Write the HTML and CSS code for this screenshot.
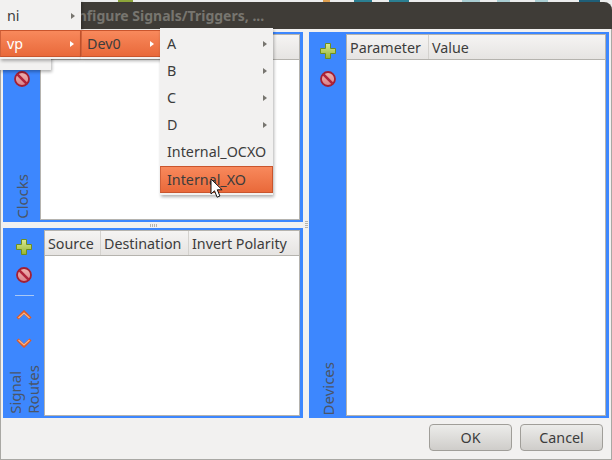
FILE: index.html
```html
<!DOCTYPE html>
<html lang="en">
<head>
  <meta charset="UTF-8" />
  <title>Configure Signals/Triggers, ...</title>
  <link rel="stylesheet" href="styles.css">
</head>
<body>
  <svg width="0" height="0" class="defs">
    <defs>
      <linearGradient id="plusFill" x1="0" y1="0" x2="0" y2="1">
        <stop offset="0" stop-color="#dcea94" />
        <stop offset="1" stop-color="#94b432" />
      </linearGradient>
      <linearGradient id="stopFill" x1="0" y1="0" x2="0" y2="1">
        <stop offset="0" stop-color="#f0b4b0" />
        <stop offset="1" stop-color="#d9808a" />
      </linearGradient>
      <symbol id="plus" viewBox="0 0 16 16">
        <path d="M5.5 .5h5v5h5v5h-5v5h-5v-5h-5v-5h5z" fill="url(#plusFill)" stroke="#6f8e20" />
      </symbol>
      <symbol id="stop" viewBox="0 0 16 16">
        <circle cx="8" cy="8" r="7" fill="url(#stopFill)" stroke="#a41f33" stroke-width="1.8" />
        <path d="M3.4 3.4l9.2 9.2" stroke="#b0233a" stroke-width="2.6" />
      </symbol>
      <symbol id="up" viewBox="0 0 16 10">
        <path d="M1.5 8.5l6.5-6.5 6.5 6.5" fill="none" stroke="#e05a24" stroke-width="3" />
        <path d="M2.5 8l5.5-5 5.5 5" fill="none" stroke="#f6b488" stroke-width="1.2" />
      </symbol>
      <symbol id="down" viewBox="0 0 16 10">
        <path d="M1.5 1.5l6.5 6.5 6.5-6.5" fill="none" stroke="#e05a24" stroke-width="3" />
        <path d="M2.5 2l5.5 5 5.5-5" fill="none" stroke="#f6b488" stroke-width="1.2" />
      </symbol>
    </defs>
  </svg>

  <div class="desktop">
    <span class="bit bit-green"></span>
    <span class="bit bit-orange"></span>
    <span class="bit bit-teal"></span>
    <span class="bit bit-teal2"></span>
    <span class="bit bit-pale"></span>
    <span class="bit bit-pale2"></span>
    <span class="bit bit-pale3"></span>
    <span class="bit bit-dark"></span>
  </div>

  <div class="window">
    <div class="titlebar"><span class="title">Configure Signals/Triggers, ...</span></div>

    <div class="content">
      <div class="left-col">
        <section class="group group-clocks">
          <div class="side side-clocks">
            <button class="tool"><svg class="ico"><use href="#plus" /></svg></button>
            <button class="tool"><svg class="ico"><use href="#stop" /></svg></button>
            <div class="side-label">Clocks</div>
          </div>
          <div class="table">
            <div class="thead"><div class="th th-blank"></div></div>
          </div>
        </section>

        <div class="split-h"><span class="grip grip-h"></span></div>

        <section class="group group-routes">
          <div class="side side-routes">
            <button class="tool"><svg class="ico"><use href="#plus" /></svg></button>
            <button class="tool"><svg class="ico"><use href="#stop" /></svg></button>
            <div class="sep"></div>
            <button class="tool"><svg class="ico-arrow"><use href="#up" /></svg></button>
            <button class="tool"><svg class="ico-arrow"><use href="#down" /></svg></button>
            <div class="side-label side-label-two">Signal<br>Routes</div>
          </div>
          <div class="table">
            <div class="thead">
              <div class="th th-source">Source</div>
              <div class="th th-dest">Destination</div>
              <div class="th th-blank">Invert Polarity</div>
            </div>
          </div>
        </section>
      </div>

      <div class="split-v"><span class="grip grip-v"></span></div>

      <section class="group group-devices">
        <div class="side side-devices">
          <button class="tool"><svg class="ico"><use href="#plus" /></svg></button>
          <button class="tool"><svg class="ico"><use href="#stop" /></svg></button>
          <div class="side-label">Devices</div>
        </div>
        <div class="table">
          <div class="thead">
            <div class="th th-param">Parameter</div>
            <div class="th th-blank">Value</div>
          </div>
        </div>
      </section>
    </div>

    <div class="buttons">
      <button class="btn">OK</button>
      <button class="btn">Cancel</button>
    </div>
  </div>

  <!-- open popup menus -->
  <div class="menu menu-back"></div>
  <div class="menu menu-root">
    <div class="item">ni<span class="arrow"></span></div>
    <div class="item active light">vp<span class="arrow"></span></div>
  </div>
  <div class="menu menu-dev">
    <div class="item active">Dev0<span class="arrow"></span></div>
  </div>
  <div class="menu menu-chan">
    <div class="item">A<span class="arrow"></span></div>
    <div class="item">B<span class="arrow"></span></div>
    <div class="item">C<span class="arrow"></span></div>
    <div class="item">D<span class="arrow"></span></div>
    <div class="item">Internal_OCXO</div>
    <div class="item active">Internal_XO</div>
  </div>

  <svg class="cursor" width="14" height="21" viewBox="0 0 14 21">
    <path d="M1 1v15l3.5-3.2 2.6 6.4 2.8-1.2-2.6-6.2h4.8z" fill="#fff" stroke="#111" stroke-width="1" />
  </svg>
</body>
</html>
```

FILE: styles.css
```css
* {
  box-sizing: border-box;
}

body {
  margin: 0;
  width: 612px;
  height: 460px;
  overflow: hidden;
  background: #eceded;
  font-family: "Noto Sans", sans-serif;
  font-size: 14.3px;
  color: #3c3c3c;
}

.defs {
  position: absolute;
}

/* bits of the desktop above the window */
.desktop {
  height: 2px;
  display: flex;
}

.bit {
  height: 2px;
}

.bit-green {
  width: 15px;
  margin-left: 118px;
  background: #8da53a;
}

.bit-orange {
  width: 7px;
  margin-left: 190px;
  background: #dfa050;
}

.bit-teal {
  width: 18px;
  margin-left: 24px;
  background: #2b7f92;
}

.bit-teal2 {
  width: 20px;
  margin-left: 17px;
  background: #2b7f92;
}

.bit-pale {
  width: 18px;
  margin-left: 53px;
  background: #a9cdd2;
}

.bit-pale2 {
  width: 13px;
  margin-left: 17px;
  background: #a9cdd2;
}

.bit-pale3 {
  width: 13px;
  margin-left: 25px;
  background: #a9cdd2;
}

.bit-dark {
  width: 21px;
  margin-left: 31px;
  background: #1f5f78;
}

.window {
  height: 458px;
  display: flex;
  flex-direction: column;
  background: #f2f1f0;
  border: 1px solid #a9a8a4;
  border-top: 0;
  border-radius: 8px 8px 0 0;
}

.titlebar {
  height: 27px;
  margin: 0 -1px;
  padding-left: 60px;
  display: flex;
  align-items: center;
  background: #3f3c37;
  border-radius: 8px 8px 0 0;
}

.title {
  font-weight: 700;
  font-size: 14px;
  color: #77756f;
}

.content {
  height: 389px;
  padding: 3px 2px 0;
  display: flex;
}

.left-col {
  width: 300px;
  display: flex;
  flex-direction: column;
}

.split-h {
  height: 6px;
  display: flex;
  justify-content: center;
  align-items: center;
}

.split-v {
  width: 6px;
  display: flex;
  justify-content: center;
  align-items: center;
}

.grip-h {
  width: 7px;
  height: 3px;
  background: repeating-linear-gradient(90deg, #b5b3ae 0 1px, transparent 1px 2px);
}

.grip-v {
  width: 3px;
  height: 7px;
  margin-bottom: 2px;
  background: repeating-linear-gradient(#b5b3ae 0 1px, transparent 1px 2px);
}

.group {
  display: flex;
  padding: 2px 3px;
  background: #3d87fe;
}

.group-clocks,
.group-routes {
  height: 190px;
}

.group-devices {
  width: 300px;
}

.side {
  display: flex;
  flex-direction: column;
  align-items: center;
  padding-top: 7px;
  gap: 8px;
}

.side-clocks,
.side-devices {
  width: 34px;
  padding-right: 2px;
}

.side-routes {
  width: 38px;
  padding-right: 2px;
}

.tool {
  width: 20px;
  height: 20px;
  padding: 0;
  border: 0;
  background: none;
  display: flex;
  align-items: center;
  justify-content: center;
}

.ico {
  width: 16px;
  height: 16px;
}

.ico-arrow {
  width: 16px;
  height: 10px;
}

.sep {
  width: 19px;
  height: 1px;
  margin: 2px 0 1px;
  background: #a9c8f5;
}

/* rotated 180deg, so padding-top is the gap under the text */
.side-label {
  margin-top: auto;
  padding-top: 1px;
  writing-mode: vertical-rl;
  transform: rotate(180deg);
  font-size: 15px;
  line-height: 18px;
  color: #4a5568;
}

.side-label-two {
  padding-top: 2px;
}

.table {
  flex: 1;
  background: #fff;
  border: 1px solid #b5b3ae;
}

.thead {
  height: 25px;
  display: flex;
  background: linear-gradient(#f5f4f3, #e6e4e2);
  border-bottom: 1px solid #b5b3ae;
}

.th {
  padding-left: 3px;
  line-height: 25px;
  white-space: nowrap;
  border-right: 1px solid #d4d2ce;
}

.th-blank {
  flex: 1;
  border-right: 0;
}

.th-source {
  width: 56px;
}

.th-dest {
  width: 88px;
}

.th-param {
  width: 82px;
}

.buttons {
  flex: 1;
  display: flex;
  justify-content: flex-end;
  align-items: flex-start;
  gap: 8px;
  padding: 6px 8px 0 0;
}

.btn {
  width: 83px;
  height: 27px;
  padding: 0;
  font-family: inherit;
  font-size: 14.3px;
  color: #3c3c3c;
  background: linear-gradient(#ececea, #cfcdca);
  border: 1px solid #a09e99;
  border-radius: 4px;
}

.menu {
  position: absolute;
  background: #f2f1f0;
  box-shadow: 1px 2px 3px rgba(0, 0, 0, .3);
}

.menu-back {
  left: 0;
  top: 50px;
  width: 51px;
  height: 20px;
}

.menu-root {
  left: 0;
  top: 0;
  width: 81px;
  height: 59px;
  padding-top: 3px;
}

.menu-dev {
  left: 81px;
  top: 30px;
  width: 80px;
  height: 29px;
}

.menu-dev .item {
  padding-left: 5px;
}

.menu-chan {
  left: 160px;
  top: 28px;
  width: 113px;
  height: 167px;
  padding-top: 3px;
}

.item {
  position: relative;
  height: 27px;
  padding-left: 7px;
  line-height: 26px;
}

.active {
  background: linear-gradient(#f8895c, #e9693a);
  border: 1px solid #c9552d;
  border-left-color: #d0613a;
  padding-left: 6px;
  line-height: 25px;
}

.light {
  color: #fff;
}

.arrow {
  position: absolute;
  right: 6px;
  top: 10px;
  border-left: 4px solid #77756f;
  border-top: 3px solid transparent;
  border-bottom: 3px solid transparent;
}

.active .arrow {
  border-left-color: #fff;
}

.cursor {
  position: absolute;
  left: 210px;
  top: 178px;
}
```
